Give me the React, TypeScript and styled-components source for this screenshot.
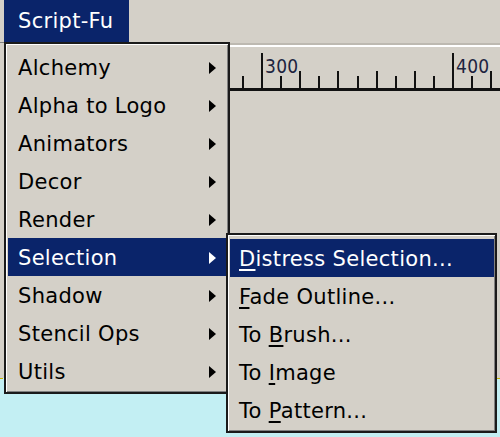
import React from "react";
import styled, { createGlobalStyle } from "styled-components";

const GlobalStyle = createGlobalStyle`
  html, body {
    margin: 0;
    padding: 0;
    background: #d4d0c8;
    overflow: hidden;
  }
  * {
    box-sizing: border-box;
  }
`;

const NAVY = "#0a246a";
const FACE = "#d4d0c8";

const Window = styled.div`
  position: relative;
  width: 500px;
  height: 437px;
  overflow: hidden;
  display: flex;
  flex-direction: column;
  background: ${FACE};
  font-family: "DejaVu Sans", Verdana, sans-serif;
  font-size: 21px;
  letter-spacing: 0.3px;
  color: #000;
`;

const MenuBar = styled.div`
  height: 42px;
  display: flex;
  align-items: stretch;
  padding-left: 4px;
`;

const MenuTitle = styled.div<{ $open?: boolean }>`
  display: flex;
  align-items: center;
  padding: 0 14px 0 14px;
  width: 125px;
  background: ${({ $open }) => ($open ? NAVY : "transparent")};
  color: ${({ $open }) => ($open ? "#fff" : "#000")};
`;

const Workspace = styled.div`
  flex: 1;
  display: flex;
  flex-direction: column;
`;

const RulerRow = styled.div`
  height: 50px;
  display: flex;
`;

const Corner = styled.div`
  width: 230px;
  border-top: 1px solid #808080;
  border-right: 2px solid #1a1a1a;
`;

const Ruler = styled.div`
  flex: 1;
  margin-top: 1px;
  border-top: 2px solid #bdb9b1;
  box-shadow: inset 0 2px 0 #ffffff;
`;

const Panel = styled.div`
  flex: 1;
  background: ${FACE};
`;

const Canvas = styled.div`
  height: 59px;
  background: #c3eff3;
  border-top: 1px dashed #c8b400;
`;

const Popup = styled.div<{ $left: number; $top: number; $width: number }>`
  position: absolute;
  left: ${({ $left }) => $left}px;
  top: ${({ $top }) => $top}px;
  width: ${({ $width }) => $width}px;
  background: ${FACE};
  border: 2px solid #1a1a1a;
  box-shadow: inset 1px 1px 0 #ffffff, inset -1px -1px 0 #808080;
  padding: 4px 1px 2px 2px;
  display: flex;
  flex-direction: column;
`;

const Item = styled.div<{ $active?: boolean; $indent: number }>`
  height: 38px;
  display: flex;
  align-items: center;
  padding: 1px 11px 0 ${({ $indent }) => $indent}px;
  background: ${({ $active }) => ($active ? NAVY : "transparent")};
  color: ${({ $active }) => ($active ? "#fff" : "#000")};
  white-space: nowrap;

  u {
    text-decoration-thickness: 2px;
    text-underline-offset: 3px;
  }
`;

const Label = styled.span`
  flex: 1;
`;

const Arrow = styled.span<{ $active?: boolean }>`
  width: 0;
  height: 0;
  border-top: 6px solid transparent;
  border-bottom: 6px solid transparent;
  border-left: 7px solid ${({ $active }) => ($active ? "#fff" : "#000")};
`;

const scriptFuItems = [
  "Alchemy",
  "Alpha to Logo",
  "Animators",
  "Decor",
  "Render",
  "Selection",
  "Shadow",
  "Stencil Ops",
  "Utils",
];

const selectionItems: { key: string; rest: string; prefix?: string }[] = [
  { key: "D", rest: "istress Selection..." },
  { key: "F", rest: "ade Outline..." },
  { prefix: "To ", key: "B", rest: "rush..." },
  { prefix: "To ", key: "I", rest: "mage" },
  { prefix: "To ", key: "P", rest: "attern..." },
];

// ruler ticks, 19.1px apart, labelled every ten
const RulerScale: React.FC = () => {
  const origin = 32; // x of the "300" mark inside the ruler
  const step = 19.1;
  const base = 43;
  const ticks = [];
  for (let k = -1; k <= 12; k++) {
    const x = Math.round(origin + k * step);
    const top = k % 10 === 0 ? 8 : k % 2 === 0 ? 26 : 31;
    ticks.push(<rect key={k} x={x - 1} y={top} width={2} height={base - top} fill="#111" />);
  }
  return (
    <svg width="270" height="47" style={{ display: "block" }}>
      {ticks}
      <rect x={0} y={base} width={270} height={3} fill="#111" />
      <text x={35} y={28} fontFamily="'DejaVu Sans Condensed', sans-serif" fontSize={19} fill="#1c2440">
        300
      </text>
      <text x={226} y={28} fontFamily="'DejaVu Sans Condensed', sans-serif" fontSize={19} fill="#1c2440">
        400
      </text>
    </svg>
  );
};

const App: React.FC = () => {
  return (
    <>
      <GlobalStyle />
      <Window>
        <MenuBar>
          <MenuTitle $open>Script-Fu</MenuTitle>
        </MenuBar>
        <Workspace>
          <RulerRow>
            <Corner />
            <Ruler>
              <RulerScale />
            </Ruler>
          </RulerRow>
          <Panel />
          <Canvas />
        </Workspace>

        <Popup $left={4} $top={42} $width={226}>
          {scriptFuItems.map((name) => {
            const active = name === "Selection";
            return (
              <Item key={name} $active={active} $indent={10}>
                <Label>{name}</Label>
                <Arrow $active={active} />
              </Item>
            );
          })}
        </Popup>

        <Popup $left={226} $top={233} $width={271}>
          {selectionItems.map((it, i) => (
            <Item key={it.rest} $active={i === 0} $indent={9}>
              <Label>
                {it.prefix}
                <u>{it.key}</u>
                {it.rest}
              </Label>
            </Item>
          ))}
        </Popup>
      </Window>
    </>
  );
};

export default App;
